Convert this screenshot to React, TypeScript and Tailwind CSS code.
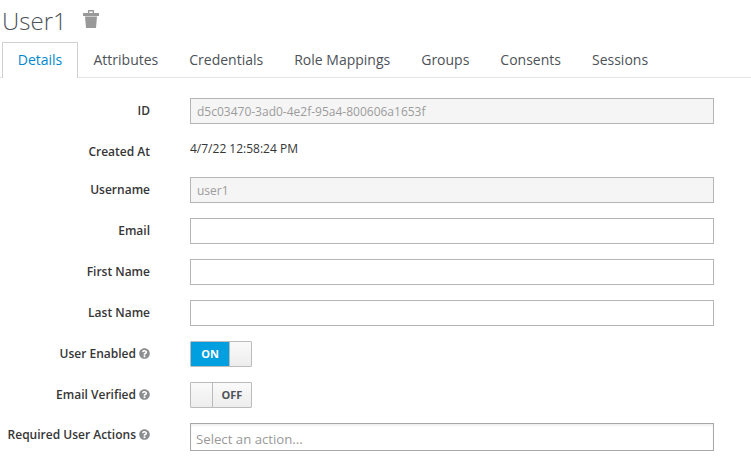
import { FaQuestionCircle } from 'react-icons/fa';

const tabs = ['Details', 'Attributes', 'Credentials', 'Role Mappings', 'Groups', 'Consents', 'Sessions'];

function TrashIcon() {
  return (
    <svg viewBox="0 0 16 18" className="ml-[16px] mt-[10px] h-[18px] w-[16px] text-[#999999]" fill="currentColor">
      <path d="M5.5 0h5a.6.6 0 0 1 .6.6V3H16v3H0V3h4.9V.6a.6.6 0 0 1 .6-.6Zm.8 1.4V3h3.4V1.4Z" />
      <path d="M2 6.6h12l-1 11.4H3Z" />
    </svg>
  );
}

function Label({ text, help, shift }: { text: string; help?: boolean; shift?: string }) {
  return (
    <label className={`flex w-[150px] shrink-0 items-center justify-end gap-[3px] text-[12px] font-semibold leading-[17px] text-[#363636] ${shift ?? 'mt-[-2px]'}`}>
      {text}
      {help && <FaQuestionCircle className="h-[11px] w-[11px] text-[#8b8d8f]" />}
    </label>
  );
}

function TextRow({ label, value, disabled }: { label: string; value?: string; disabled?: boolean }) {
  return (
    <div className="mb-[15px] flex items-center">
      <Label text={label} />
      <input
        readOnly
        value={value ?? ''}
        className={`ml-[40px] h-[26px] w-[524px] border border-[#b5b5b5] px-[6px] text-[12px] outline-none ${
          disabled ? 'bg-[#f5f5f5] text-[#9c9c9c]' : 'bg-white'
        }`}
      />
    </div>
  );
}

function Toggle({ on }: { on: boolean }) {
  return (
    <div className="ml-[40px] flex h-[26px] w-[62px] overflow-hidden rounded-[1px] border border-[#bbb] text-[11px] font-bold">
      {on ? (
        <>
          <span className="flex w-[38px] items-center justify-center bg-[#00a0e0] text-white">ON</span>
          <span className="flex-1 border-l border-[#bbb] bg-gradient-to-b from-[#fafafa] to-[#ededed]" />
        </>
      ) : (
        <>
          <span className="w-[22px] border-r border-[#bbb] bg-gradient-to-b from-[#fafafa] to-[#ededed]" />
          <span className="flex flex-1 items-center justify-center bg-gradient-to-b from-[#fafafa] to-[#ededed] text-[#4d5258]">OFF</span>
        </>
      )}
    </div>
  );
}

export default function App() {
  return (
    <div className="h-[465px] w-[751px] overflow-hidden bg-white font-['Open_Sans',sans-serif] text-[#363636]">
      <div className="flex h-[42px] items-start pl-[2px]">
        <h1 className="text-[24px] font-light leading-[41px] text-[#4d5258]">User1</h1>
        <TrashIcon />
      </div>

      <div className="flex h-[36px] border-b border-[#e6e6e6] pl-[2px]">
        {tabs.map((t, i) => (
          <div
            key={t}
            className={
              i === 0
                ? 'mb-[-1px] flex h-[36px] w-[76px] items-center justify-center border border-b-0 border-[#d1d1d1] bg-white pb-[2px] text-[14px] text-[#0088ce]'
                : 'mb-[-1px] flex h-[36px] items-center px-[15.5px] pb-[2px] text-[14px] text-[#4d5258]'
            }
          >
            {t}
          </div>
        ))}
      </div>

      <div className="mt-[20px]">
        <TextRow label="ID" value="d5c03470-3ad0-4e2f-95a4-800606a1653f" disabled />
        <div className="mb-[15px] flex h-[23px] items-center">
          <Label text="Created At" shift="mt-[2px]" />
          <span className="ml-[40px] mt-[-3px] text-[12px] text-[#363636]">4/7/22 12:58:24 PM</span>
        </div>
        <TextRow label="Username" value="user1" disabled />
        <TextRow label="Email" />
        <TextRow label="First Name" />
        <TextRow label="Last Name" />
        <div className="mb-[15px] flex items-center">
          <Label text="User Enabled" help />
          <Toggle on />
        </div>
        <div className="mb-[15px] flex items-center">
          <Label text="Email Verified" help />
          <Toggle on={false} />
        </div>
        <div className="flex items-start">
          <div className="mt-[3px]">
            <Label text="Required User Actions" help shift="mt-0" />
          </div>
          <div className="ml-[40px] flex h-[28px] w-[524px] items-center border border-[#a8a8a8] px-[5px] pt-[5px] text-[13.2px] text-[#999] shadow-[inset_0_2px_2px_rgba(0,0,0,0.06)]">
            Select an action...
          </div>
        </div>
      </div>
    </div>
  );
}
